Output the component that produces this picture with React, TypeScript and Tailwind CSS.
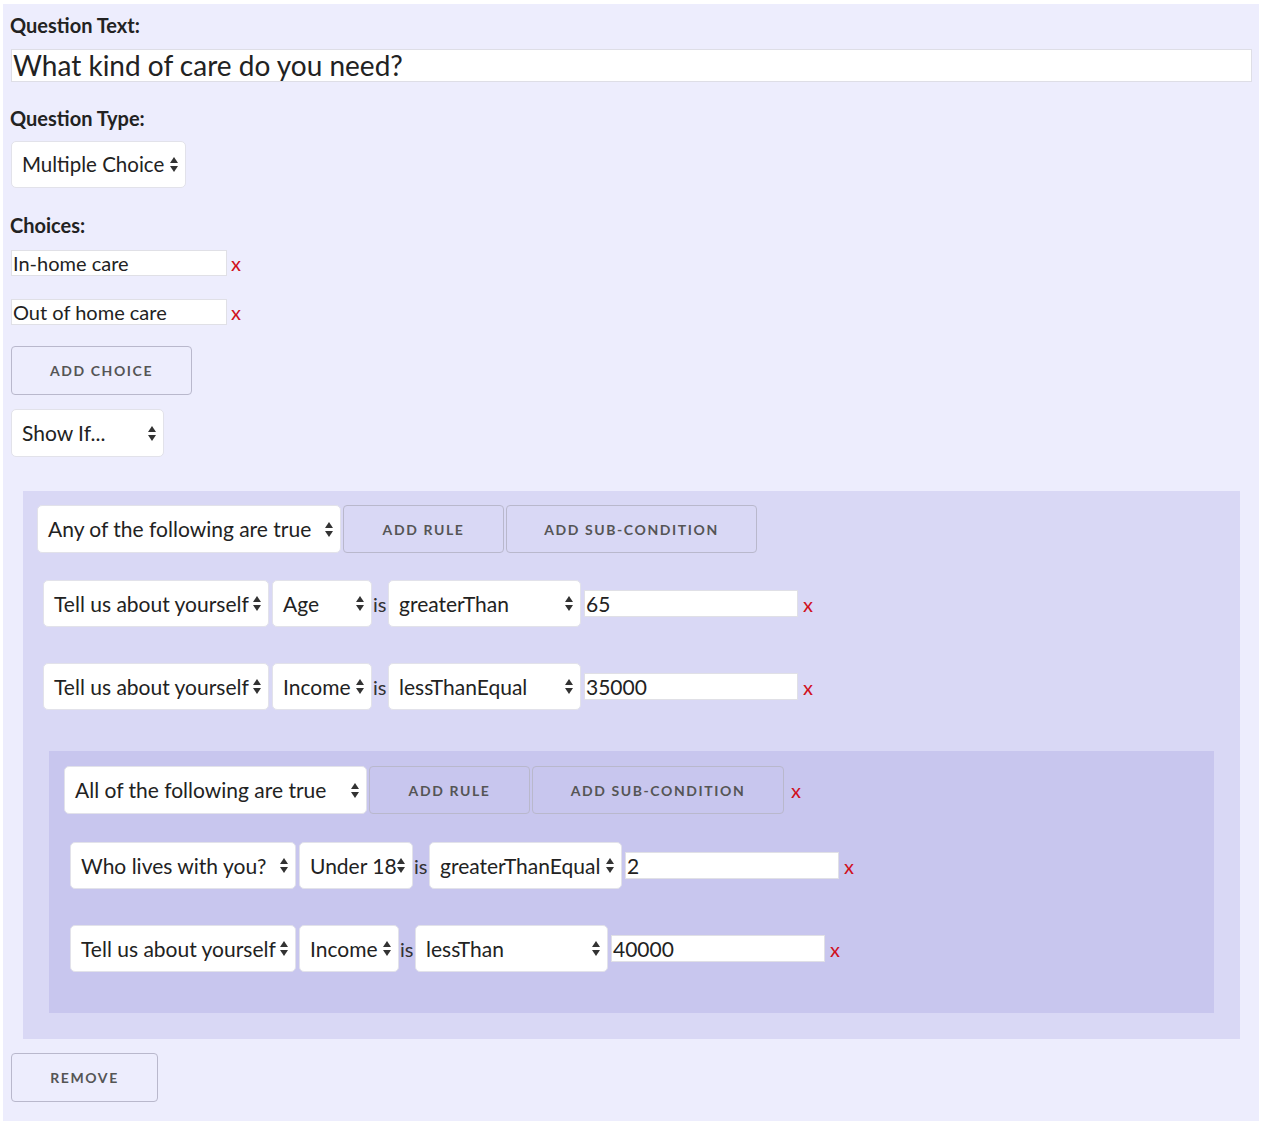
import React from "react";

const font = { fontFamily: "Lato, 'Open Sans', sans-serif" };

function Arrows() {
  return (
    <svg width="8" height="15" viewBox="0 0 8 15" className="shrink-0">
      <path d="M4 0 L8 6 L0 6 Z" fill="#333" />
      <path d="M0 9 L8 9 L4 15 Z" fill="#333" />
    </svg>
  );
}

function Select({ label, w, h = "h-[47px]", text = "text-[21px]" }: { label: string; w: string; h?: string; text?: string }) {
  return (
    <div
      className={`${w} ${h} ${text} flex items-center justify-between shrink-0 bg-white border border-[#e2e2ea] rounded-[5px] pl-[10px] pr-[7px] text-[#222]`}
    >
      <span className="whitespace-nowrap">{label}</span>
      <Arrows />
    </div>
  );
}

function Btn({ label, w, h = "h-[48px]" }: { label: string; w: string; h?: string }) {
  return (
    <div
      className={`${w} ${h} shrink-0 flex items-center justify-center border border-[#b9b8cc] rounded-[4px] text-[14px] font-bold tracking-[1.6px] text-[#555]`}
    >
      {label}
    </div>
  );
}

function X({ className = "" }: { className?: string }) {
  return <span className={`text-[#d0101e] text-[20px] leading-none ${className}`}>x</span>;
}

function Rule({ q, f, fw, op, val, indent }: { q: string; f: string; fw: string; op: string; val: string; indent: string }) {
  return (
    <div className={`flex items-center ${indent}`}>
      <Select label={q} w="w-[226px]" />
      <div className="w-[3px]" />
      <Select label={f} w={fw} />
      <span className="text-[20px] text-[#333] pl-[1px] w-[16px]">is</span>
      <Select label={op} w="w-[193px]" />
      <div className="ml-[3px] w-[214px] h-[27px] bg-white border border-[#e0e0e6] text-[21px] leading-[25px] pl-[1px] text-[#222]">
        {val}
      </div>
      <X className="ml-[5px]" />
    </div>
  );
}

export default function App() {
  return (
    <div className="bg-white min-h-[1131px] pt-[4px] pl-[3px]" style={font}>
      <div className="w-[1256px] bg-[#ededfd] pt-[9px] pb-[19px] pl-[8px] text-[#222]">
        <div className="text-[20px] font-bold leading-6 -ml-[1px] text-[#222]">Question Text:</div>
        <div className="mt-[12px] w-[1241px] h-[33px] bg-white border border-[#dedee6] text-[28px] leading-[30px] pl-[1px] text-[#222]">
          What kind of care do you need?
        </div>

        <div className="mt-[24px] -ml-[1px] text-[20px] font-bold leading-6">Question Type:</div>
        <div className="mt-[11px]">
          <Select label="Multiple Choice" w="w-[175px]" h="h-[47px]" text="text-[20.5px]" />
        </div>

        <div className="mt-[25px] -ml-[1px] text-[20px] font-bold leading-6">Choices:</div>
        <div className="mt-[13px] flex items-center">
          <div className="w-[216px] h-[26px] bg-white border border-[#e0e0e6] text-[20px] leading-[24px] pl-[1px]">In-home care</div>
          <X className="ml-[4px]" />
        </div>
        <div className="mt-[23px] flex items-center">
          <div className="w-[216px] h-[26px] bg-white border border-[#e0e0e6] text-[20px] leading-[24px] pl-[1px]">Out of home care</div>
          <X className="ml-[4px]" />
        </div>

        <div className="mt-[21px]">
          <Btn label="ADD CHOICE" w="w-[181px]" h="h-[49px]" />
        </div>
        <div className="mt-[14px]">
          <Select label="Show If..." w="w-[153px]" h="h-[48px]" />
        </div>

        <div className="mt-[34px] ml-[12px] w-[1217px] bg-[#d9d8f5] px-[14px] pt-[14px] pb-[26px]">
          <div className="flex items-center">
            <Select label="Any of the following are true" w="w-[304px]" h="h-[48px]" />
            <div className="w-[2px]" />
            <Btn label="ADD RULE" w="w-[161px]" />
            <div className="w-[2px]" />
            <Btn label="ADD SUB-CONDITION" w="w-[251px]" />
          </div>

          <div className="mt-[27px]">
            <Rule q="Tell us about yourself" f="Age" fw="w-[100px]" op="greaterThan" val="65" indent="ml-[6px]" />
          </div>
          <div className="mt-[36px]">
            <Rule q="Tell us about yourself" f="Income" fw="w-[100px]" op="lessThanEqual" val="35000" indent="ml-[6px]" />
          </div>

          <div className="mt-[41px] mx-[12px] bg-[#c8c6ee] px-[15px] pt-[15px] pb-[41px]">
            <div className="flex items-center">
              <Select label="All of the following are true" w="w-[303px]" h="h-[48px]" />
              <div className="w-[2px]" />
              <Btn label="ADD RULE" w="w-[161px]" />
              <div className="w-[2px]" />
              <Btn label="ADD SUB-CONDITION" w="w-[252px]" />
              <X className="ml-[7px]" />
            </div>
            <div className="mt-[28px]">
              <Rule q="Who lives with you?" f="Under 18" fw="w-[114px]" op="greaterThanEqual" val="2" indent="ml-[6px]" />
            </div>
            <div className="mt-[36px]">
              <Rule q="Tell us about yourself" f="Income" fw="w-[100px]" op="lessThan" val="40000" indent="ml-[6px]" />
            </div>
          </div>
        </div>

        <div className="mt-[14px]">
          <Btn label="REMOVE" w="w-[147px]" h="h-[49px]" />
        </div>
      </div>
    </div>
  );
}
